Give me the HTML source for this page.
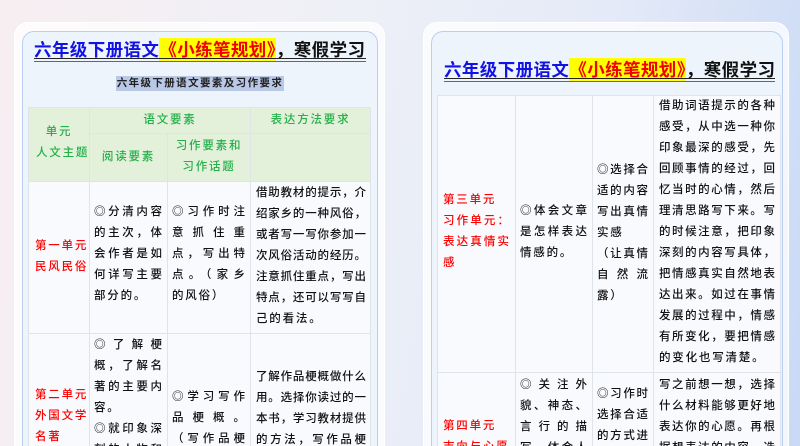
<!DOCTYPE html>
<html><head><meta charset="utf-8"><style>
*{margin:0;padding:0;box-sizing:border-box}
html{width:800px;height:446px;overflow:hidden}
body{width:800px;height:446px;overflow:hidden;position:relative;font-family:"Liberation Sans","Noto Sans CJK SC",sans-serif;background:linear-gradient(100deg,#f7eef1 0%,#eef0f7 40%,#e4eaf7 70%,#c9d9f6 100%)}
.outer{position:absolute;border-radius:14px;background:rgba(255,255,255,.75);border:1px solid #fff}
.inner{position:absolute;border-radius:12px;background:#eef4fb;border:1.5px solid #b9cff1}
.title{position:absolute;font-size:17.5px;font-weight:bold;white-space:nowrap;line-height:22px;letter-spacing:.4px}
.title .b{color:#1212e6}.title .h{background:#ffff00;color:#f20000;padding:2px 0}.title .k{color:#111}
.ul{position:absolute;height:4px;border-top:1.5px solid #222;border-bottom:1px solid #666}
.c{position:absolute;background:#f8fafd;border:1px solid #dfe4ea}
.hd{background:#e3f0da}
.t{position:absolute;font-size:11.5px;line-height:21px;color:#111;font-weight:500;letter-spacing:1.8px;white-space:nowrap}
.t div{text-align-last:justify;letter-spacing:0}
.t div.n{text-align-last:auto;letter-spacing:1.8px}
.g{color:#25b04a}.r{color:#f00}
</style></head><body>
<!-- LEFT -->
<div class="outer" style="left:14px;top:22px;width:371px;height:424px;border-bottom:none;border-radius:14px 14px 0 0"></div>
<div class="inner" style="left:22px;top:31px;width:356px;height:415px;border-bottom:none;border-radius:12px 12px 0 0"></div>
<div class="title" style="left:34px;top:39px"><span class="b">六年级下册语文</span><span class="h">《小练笔规划》</span><span class="k">，寒假学习</span></div>
<div class="ul" style="left:34px;top:58px;width:332px"></div>
<div style="position:absolute;left:116px;top:76px;width:168px;height:15px;background:#b9c8e6;font-size:10.5px;line-height:15px;color:#222;letter-spacing:1.4px;text-align:center;font-weight:bold">六年级下册语文要素及习作要求</div>

<div class="c hd" style="left:28px;top:107px;width:62px;height:75px"></div>
<div class="c hd" style="left:89px;top:107px;width:162px;height:27px"></div>
<div class="c hd" style="left:250px;top:107px;width:121px;height:27px"></div>
<div class="c hd" style="left:89px;top:133px;width:79px;height:49px"></div>
<div class="c hd" style="left:167px;top:133px;width:84px;height:49px"></div>
<div class="c hd" style="left:250px;top:133px;width:121px;height:49px"></div>
<div class="c" style="left:28px;top:181px;width:62px;height:153px"></div>
<div class="c" style="left:89px;top:181px;width:79px;height:153px"></div>
<div class="c" style="left:167px;top:181px;width:84px;height:153px"></div>
<div class="c" style="left:250px;top:181px;width:121px;height:153px"></div>
<div class="c" style="left:28px;top:333px;width:62px;height:113px;border-bottom:none"></div>
<div class="c" style="left:89px;top:333px;width:79px;height:113px;border-bottom:none"></div>
<div class="c" style="left:167px;top:333px;width:84px;height:113px;border-bottom:none"></div>
<div class="c" style="left:250px;top:333px;width:121px;height:113px;border-bottom:none"></div>

<div class="t g" style="left:36px;top:122px;width:46px;text-align:center">单元<br>人文主题</div>
<div class="t g" style="left:89px;top:110px;width:162px;text-align:center">语文要素</div>
<div class="t g" style="left:250px;top:110px;width:121px;text-align:center">表达方法要求</div>
<div class="t g" style="left:89px;top:147px;width:79px;text-align:center">阅读要素</div>
<div class="t g" style="left:167px;top:136px;width:84px;text-align:center">习作要素和<br>习作话题</div>

<div class="t r" style="left:35px;top:236px">第一单元<br>民风民俗</div>
<div class="t" style="left:94px;top:202px;width:68px"><div>◎分清内容</div><div>的主次，体</div><div>会作者是如</div><div>何详写主要</div><div class="n">部分的。</div></div>
<div class="t" style="left:172px;top:202px;width:73px"><div>◎习作时注</div><div>意抓住重</div><div>点，写出特</div><div>点。（家乡</div><div class="n">的风俗）</div></div>
<div class="t" style="left:256px;top:183px;width:110px"><div>借助教材的提示，介</div><div>绍家乡的一种风俗，</div><div>或者写一写你参加一</div><div>次风俗活动的经历。</div><div>注意抓住重点，写出</div><div>特点，还可以写写自</div><div class="n">己的看法。</div></div>

<div class="t r" style="left:35px;top:385px">第二单元<br>外国文学<br>名著</div>
<div class="t" style="left:94px;top:335px;width:68px"><div>◎了解梗</div><div>概，了解名</div><div>著的主要内</div><div class="n">容。</div><div>◎就印象深</div><div>刻的人物和</div></div>
<div class="t" style="left:172px;top:387px;width:73px"><div>◎学习写作</div><div>品梗概。</div><div>（写作品梗</div></div>
<div class="t" style="left:256px;top:367px;width:110px"><div>了解作品梗概做什么</div><div>用。选择你读过的一</div><div>本书，学习教材提供</div><div>的方法，写作品梗</div></div>

<!-- RIGHT -->
<div class="outer" style="left:423px;top:22px;width:366px;height:424px;border-bottom:none;border-radius:14px 14px 0 0"></div>
<div class="inner" style="left:431px;top:31px;width:352px;height:415px;border-bottom:none;border-radius:12px 12px 0 0"></div>
<div class="title" style="left:444px;top:59px"><span class="b">六年级下册语文</span><span class="h">《小练笔规划》</span><span class="k">，寒假学习</span></div>
<div class="ul" style="left:444px;top:78px;width:331px"></div>

<div class="c" style="left:437px;top:95px;width:79px;height:278px"></div>
<div class="c" style="left:515px;top:95px;width:78px;height:278px"></div>
<div class="c" style="left:592px;top:95px;width:62px;height:278px"></div>
<div class="c" style="left:653px;top:95px;width:128px;height:278px"></div>
<div class="c" style="left:437px;top:372px;width:79px;height:74px;border-bottom:none"></div>
<div class="c" style="left:515px;top:372px;width:78px;height:74px;border-bottom:none"></div>
<div class="c" style="left:592px;top:372px;width:62px;height:74px;border-bottom:none"></div>
<div class="c" style="left:653px;top:372px;width:128px;height:74px;border-bottom:none"></div>

<div class="t r" style="left:443px;top:190px;width:66px"><div class="n">第三单元</div><div>习作单元：</div><div>表达真情实</div><div class="n">感</div></div>
<div class="t" style="left:520px;top:201px;width:67px"><div>◎体会文章</div><div>是怎样表达</div><div class="n">情感的。</div></div>
<div class="t" style="left:597px;top:160px;width:51px"><div>◎选择合</div><div>适的内容</div><div>写出真情</div><div class="n">实感</div><div>（让真情</div><div>自然流</div><div class="n">露）</div></div>
<div class="t" style="left:659px;top:96px;width:116px"><div>借助词语提示的各种</div><div>感受，从中选一种你</div><div>印象最深的感受，先</div><div>回顾事情的经过，回</div><div>忆当时的心情，然后</div><div>理清思路写下来。写</div><div>的时候注意，把印象</div><div>深刻的内容写具体，</div><div>把情感真实自然地表</div><div>达出来。如过在事情</div><div>发展的过程中，情感</div><div>有所变化，要把情感</div><div class="n">的变化也写清楚。</div></div>

<div class="t r" style="left:443px;top:416px">第四单元<br>志向与心愿</div>
<div class="t" style="left:520px;top:375px;width:67px"><div>◎关注外</div><div>貌、神态、</div><div>言行的描</div><div>写，体会人</div></div>
<div class="t" style="left:597px;top:384px;width:51px"><div>◎习作时</div><div>选择合适</div><div>的方式进</div></div>
<div class="t" style="left:659px;top:375px;width:116px"><div>写之前想一想，选择</div><div>什么材料能够更好地</div><div>表达你的心愿。再根</div><div>据想表达的内容，选</div></div>
</body></html>
